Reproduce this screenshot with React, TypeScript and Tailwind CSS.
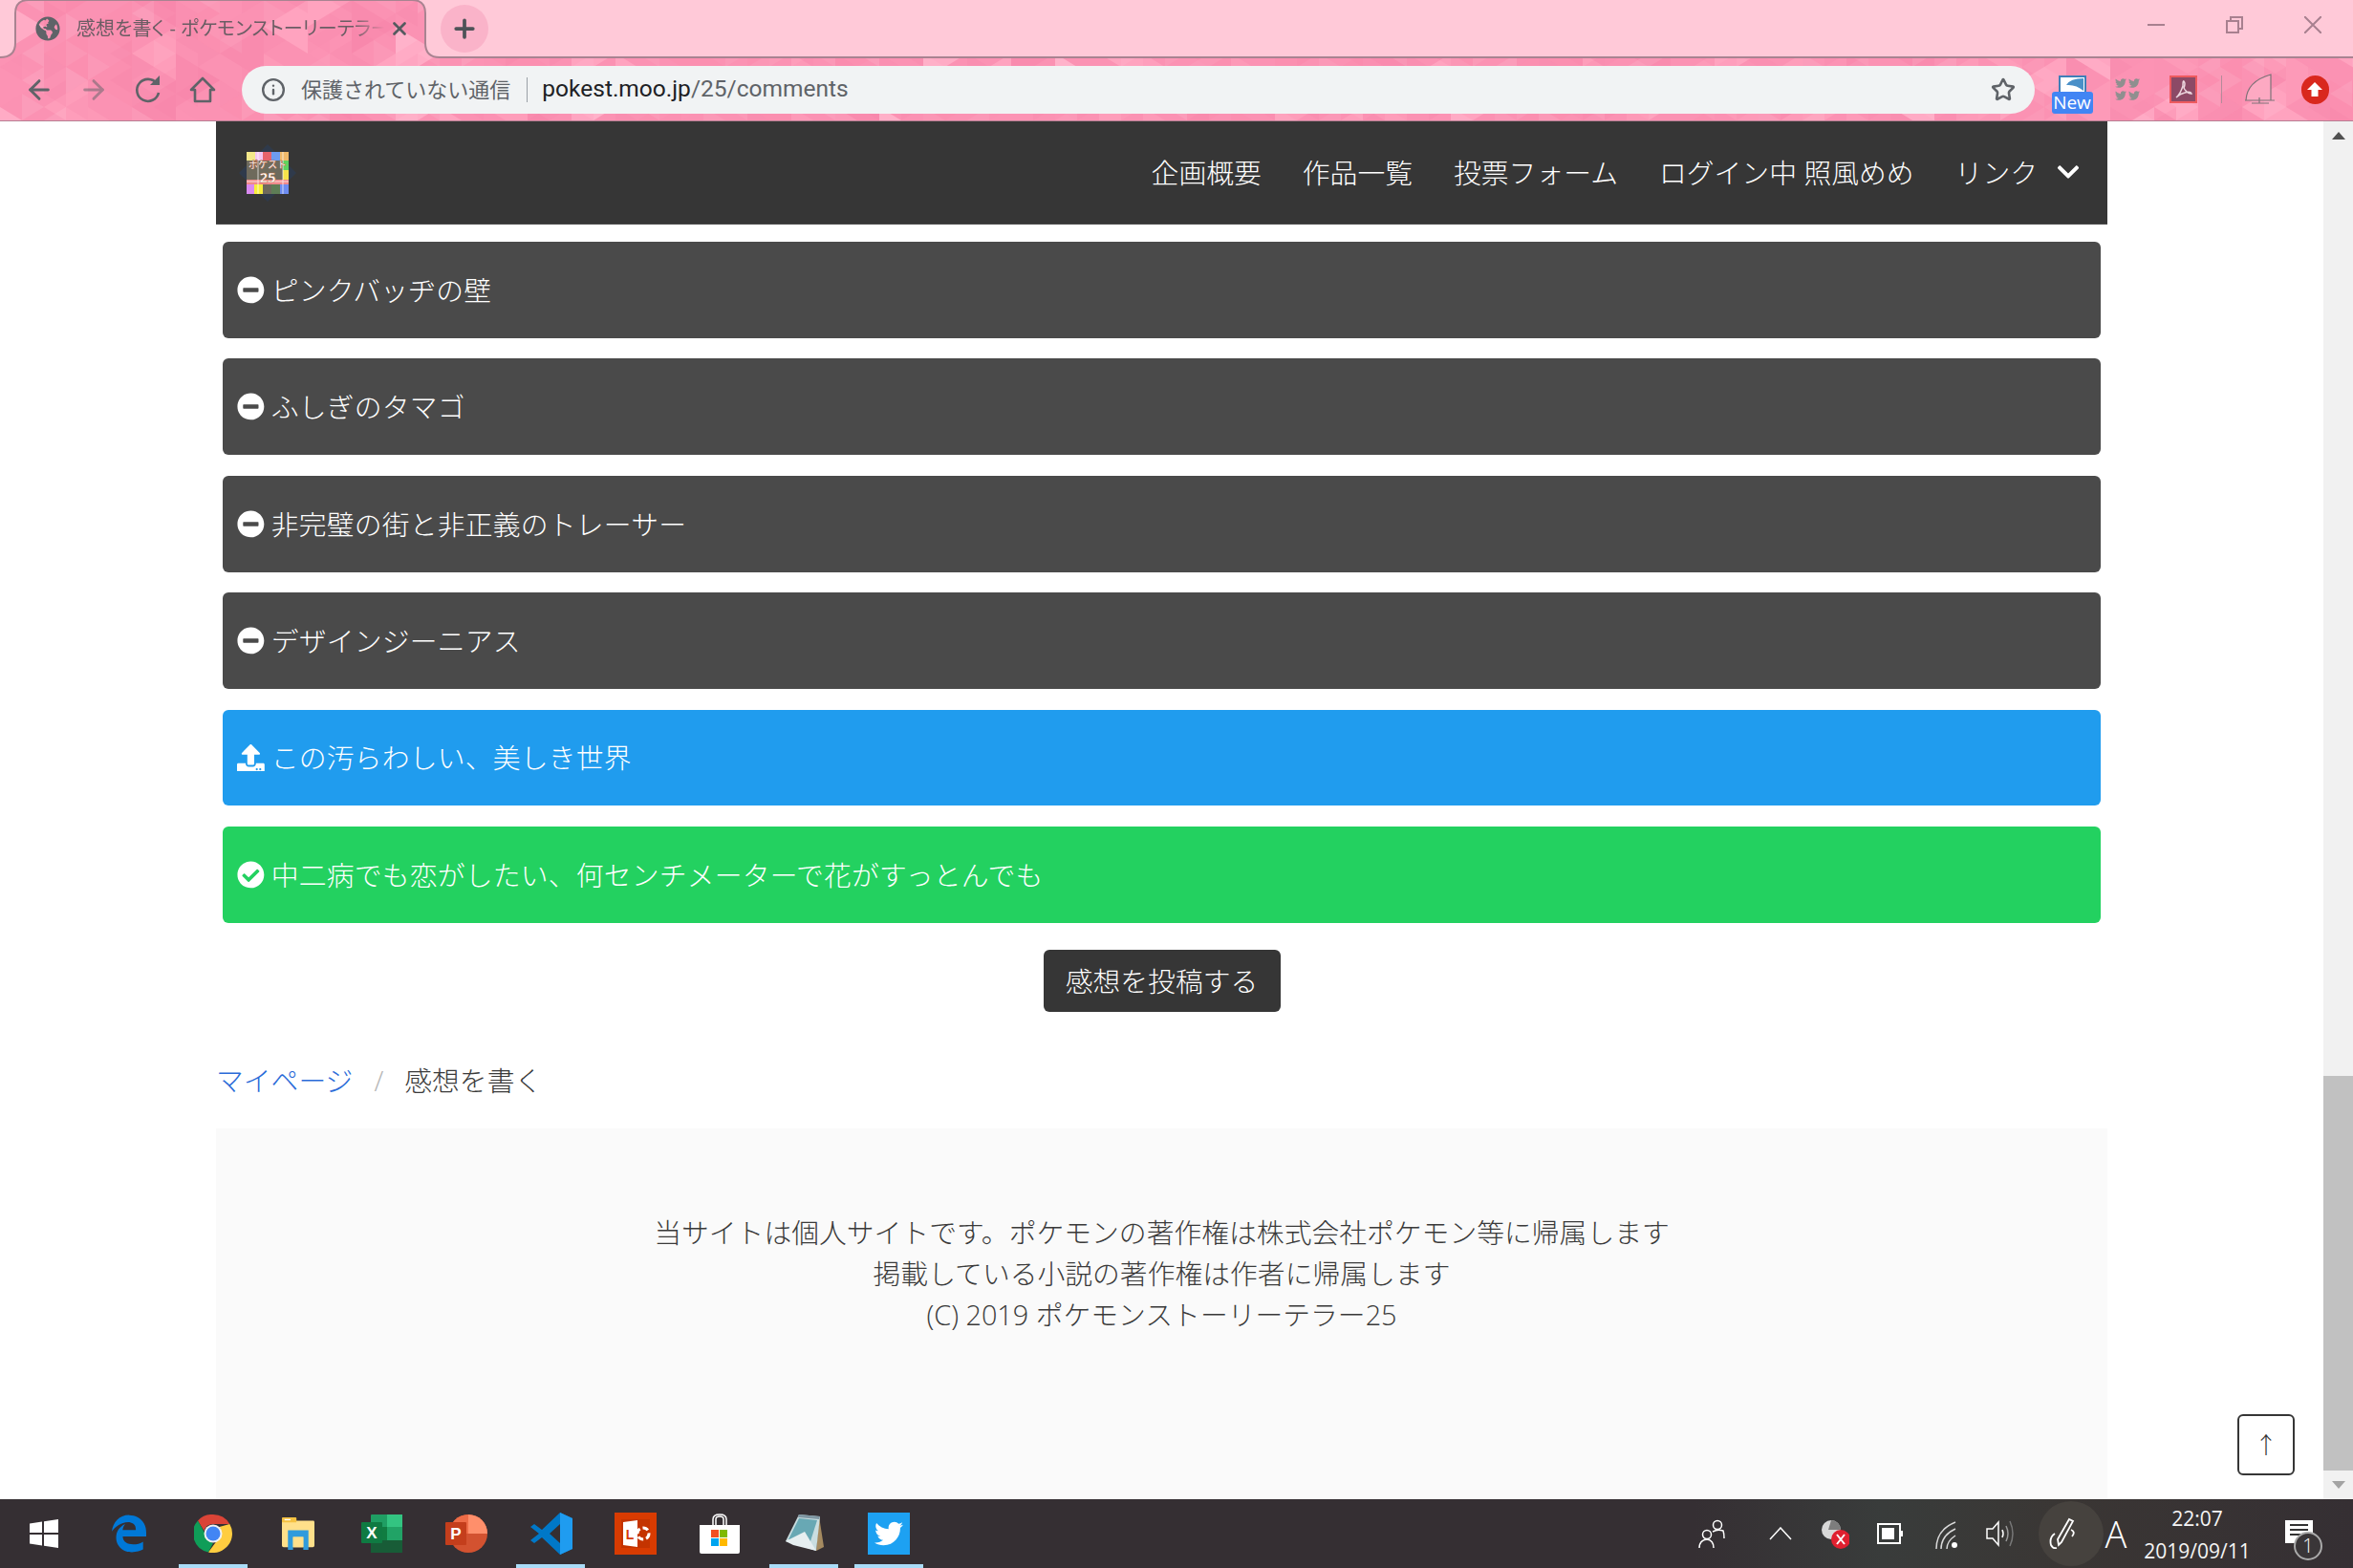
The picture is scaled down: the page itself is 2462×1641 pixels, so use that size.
import React from 'react';
import { ArrowLeft, ArrowRight, Info, Plus, Star, X } from 'lucide-react';
import {
  FaCheckCircle,
  FaChevronDown,
  FaEdgeLegacy,
  FaGlobeAmericas,
  FaMinusCircle,
  FaTwitter,
  FaUpload,
} from 'react-icons/fa';

// Pink triangle theme behind the tab and the toolbar
const makeTriangles = (w: number, h: number, startSeed: number, shades: string[]) => {
  const list: { d: string; fill: string }[] = [];
  let seed = startSeed;
  const next = () => {
    seed = (seed * 1103515245 + 12345) % 2147483648;
    return seed / 2147483648;
  };
  const cols = Math.ceil(2462 / w);
  const rowCount = Math.ceil(127 / h) + 2;
  for (let c = 0; c < cols; c++) {
    for (let r = -1; r < rowCount; r++) {
      const x = c * w;
      const y = r * h + (c % 2 ? h / 2 : 0);
      const right = next() > 0.5;
      const d = right
        ? `M${x} ${y}L${x + w} ${y + h / 2}L${x} ${y + h}Z`
        : `M${x + w} ${y}L${x} ${y + h / 2}L${x + w} ${y + h}Z`;
      list.push({ d, fill: shades[Math.floor(next() * shades.length)] });
    }
  }
  return list;
};

const triangles = [
  ...makeTriangles(46, 56, 7, ['#fb8fb0', '#fd9ab8', '#f98bae', '#ffa3bf', '#fc93b4', '#fe9dba', '#fb8fb0', '#ffabc5']),
  ...makeTriangles(23, 28, 31, ['#ffffff18', '#f4789f26', 'none', 'none', '#ffffff10', '#f4789f18']),
];

const themeShape =
  'M0 60Q16 60 16 45V14Q16 0 30 0H431Q445 0 445 14V45Q445 60 460 60H2462V127H0Z';

const ThemeBackdrop = () => (
  <svg className="absolute inset-0" width="2462" height="127" viewBox="0 0 2462 127">
    <defs>
      <clipPath id="theme-clip">
        <path d={themeShape} />
      </clipPath>
    </defs>
    <g clipPath="url(#theme-clip)">
      <rect width="2462" height="127" fill="#fb92b3" />
      {triangles.map((t, i) => (
        <path key={i} d={t.d} fill={t.fill} />
      ))}
    </g>
    <path
      d="M0 60Q16 60 16 45V14Q16 0 30 0H431Q445 0 445 14V45Q445 60 460 60H2462"
      fill="none"
      stroke="#a98391"
      strokeWidth="2"
    />
    <rect y="126" width="2462" height="1" fill="#b77f93" />
  </svg>
);

const WindowControls = () => (
  <div className="ml-auto flex items-center pb-[8px]">
    <div className="w-[82px] flex justify-center">
      <svg width="18" height="2"><rect width="18" height="2" fill="#a8808f" /></svg>
    </div>
    <div className="w-[82px] flex justify-center">
      <svg width="18" height="18" fill="none" stroke="#a8808f" strokeWidth="2">
        <rect x="1" y="5" width="12" height="12" />
        <path d="M5 5V1H17V13H13" />
      </svg>
    </div>
    <div className="w-[82px] flex justify-center">
      <svg width="18" height="18" stroke="#a8808f" strokeWidth="2">
        <path d="M0 0L18 18M18 0L0 18" />
      </svg>
    </div>
    <div className="w-[1px]" />
  </div>
);

const ToolbarExtensions = () => (
  <div className="flex items-center ml-[10px]">
    <div className="w-[58px] flex justify-center mt-[10px]">
      <div className="relative w-[43px] h-[40px]">
        <svg className="absolute left-[7px] top-0" width="29" height="20" viewBox="0 0 29 20">
          <rect x="1" y="1" width="27" height="19" fill="#fff" stroke="#3f7fb8" strokeWidth="2" />
          <path d="M8 10Q12 3 26 3V16Q18 9 8 10Z" fill="#4a90c8" />
        </svg>
        <div className="absolute left-0 bottom-0 w-[43px] h-[23px] rounded-[3px] bg-[#4285f4] text-white text-[19px] leading-[23px] text-center font-normal">
          New
        </div>
      </div>
    </div>
    <div className="w-[58px] flex justify-center">
      <div className="grid grid-cols-2 gap-x-[2px] gap-y-[1px] text-[#8f8f8f] text-[12px]">
        <FaTwitter />
        <FaTwitter />
        <FaTwitter />
        <FaTwitter />
      </div>
    </div>
    <div className="w-[58px] flex justify-center">
      <svg width="29" height="29" viewBox="0 0 29 29">
        <rect x="1" y="1" width="27" height="27" fill="#8c4a66" stroke="#ee5a5f" strokeWidth="2" />
        <path
          d="M7 23Q11 20 14 11Q14 5 15 6Q17 8 15 13Q18 19 23 19Q22 16 16 18Q11 19 7 23Z"
          fill="none"
          stroke="#ecd6de"
          strokeWidth="1.5"
        />
      </svg>
    </div>
    <div className="ml-[11px] w-[1px] h-[29px] bg-[#b58a9a]" />
    <div className="ml-[12px] w-[56px] flex justify-center">
      <svg width="32" height="34" viewBox="0 0 32 34" fill="none" stroke="#7f7278" strokeWidth="1.2">
        <path d="M1 28Q2 8 27 1V28" fill="#fda9c2" />
        <path d="M0 28H31M15 25V31M7 31H25" />
      </svg>
    </div>
    <div className="w-[58px] flex justify-center">
      <div className="w-[29px] h-[30px] rounded-full bg-[#d9281e] flex items-center justify-center">
        <svg width="16" height="15" viewBox="0 0 16 15" fill="#fff">
          <path d="M0 8L8 0L16 8H11.500V15H4.500V8Z" />
        </svg>
      </div>
    </div>
  </div>
);

const ReloadGlyph = () => (
  <svg width="30" height="30" viewBox="0 0 30 30" fill="none" stroke="currentColor" strokeWidth="2.6">
    <path d="M24 8.500A11.500 11.500 0 1 0 26 18" />
    <path d="M17 10H27V0Z" fill="currentColor" stroke="none" />
  </svg>
);

const HomeGlyph = () => (
  <svg width="30" height="30" viewBox="0 0 30 30" fill="none" stroke="currentColor" strokeWidth="2.6">
    <path d="M3 15L15 3L27 15H23V27H7V15Z" strokeLinejoin="round" />
  </svg>
);

const BrowserChrome = () => (
  <div className="relative h-[127px] shrink-0 bg-[#ffc9d8]">
    <ThemeBackdrop />
    <div className="relative flex h-[60px]">
      <div className="ml-[37px] w-[396px] flex items-center">
        <FaGlobeAmericas className="text-[#5f6368] text-[26px] shrink-0" />
        <div className="ml-[17px] w-[322px] overflow-hidden whitespace-nowrap text-[20px] font-normal text-[#6b5d64] [font-feature-settings:'palt'] [mask-image:linear-gradient(90deg,#000_90%,transparent)]">
          感想を書く - ポケモンストーリーテラー25
        </div>
        <X className="ml-[5px] text-[#555a5f] shrink-0" size={22} strokeWidth={3} />
      </div>
      <div className="ml-[28px] mt-[5px] w-[50px] h-[50px] rounded-full bg-[#fab3c9] flex items-center justify-center text-[#4e5358]">
        <Plus size={30} strokeWidth={3} />
      </div>
      <WindowControls />
    </div>
    <div className="relative flex items-center h-[67px] pl-[12px] text-[#5f6368]">
      <div className="w-[57px] flex justify-center"><ArrowLeft size={32} strokeWidth={2.2} /></div>
      <div className="w-[57px] flex justify-center opacity-50"><ArrowRight size={32} strokeWidth={2.2} /></div>
      <div className="w-[57px] flex justify-center"><ReloadGlyph /></div>
      <div className="w-[57px] flex justify-center"><HomeGlyph /></div>
      <div className="ml-[13px] w-[1876px] h-[50px] rounded-full bg-[#f1f3f4] flex items-center">
        <Info className="ml-[20px]" size={26} strokeWidth={2.2} />
        <span className="ml-[16px] text-[22px] font-normal">保護されていない通信</span>
        <div className="ml-[17px] w-[1px] h-[26px] bg-[#9aa0a6]" />
        <span className="ml-[15px] text-[24.5px] font-normal [font-family:'Roboto','Noto_Sans_CJK_JP',sans-serif] text-[#202124]">
          pokest.moo.jp<span className="text-[#5f6368]">/25/comments</span>
        </span>
        <Star className="ml-auto mr-[20px]" size={26} strokeWidth={2.4} />
      </div>
      <ToolbarExtensions />
    </div>
  </div>
);

const SiteLogo = () => (
  <svg width="60" height="60" viewBox="0 0 60 60">
    <path d="M30 0L60 30L30 60L0 30Z" fill="#2f3a4b" />
    <rect x="8" y="8" width="44" height="44" fill="#6e6a5c" />
    <rect x="8" y="8" width="9" height="9" fill="#f4e88a" />
    <rect x="17" y="8" width="8" height="9" fill="#f5c6f2" />
    <rect x="25" y="8" width="9" height="9" fill="#e8636b" />
    <rect x="34" y="8" width="9" height="9" fill="#6d9bf0" />
    <rect x="43" y="8" width="9" height="9" fill="#f0b96a" />
    <rect x="46" y="17" width="6" height="10" fill="#5fd35f" />
    <rect x="46" y="27" width="6" height="10" fill="#f4e34a" />
    <rect x="8" y="37" width="44" height="5" fill="#f08a8a" />
    <rect x="8" y="42" width="8" height="10" fill="#d98af0" />
    <rect x="16" y="42" width="9" height="10" fill="#f7ee3a" />
    <rect x="34" y="42" width="9" height="10" fill="#5e7d55" />
    <rect x="43" y="42" width="9" height="10" fill="#6d8cf0" />
    <path d="M8 39H52M20 8V52M46 8V52" stroke="#fff" strokeWidth="1" opacity="0.7" />
    <text x="30" y="25" textAnchor="middle" fontSize="10" fontWeight="700" fill="#fff" stroke="#a5502a" strokeWidth="0.4">
      ポケスト
    </text>
    <text x="30" y="40" textAnchor="middle" fontSize="15" fontWeight="700" fill="#fff" stroke="#b5602a" strokeWidth="0.4">
      25
    </text>
  </svg>
);

const SiteHeader = () => (
  <nav className="h-[108px] bg-[#363636] border-b border-[#4a4a4a] flex items-center pl-[24px] pr-[28px] text-white">
    <SiteLogo />
    <div className="ml-auto flex items-center gap-[43px]">
      <span>企画概要</span>
      <span>作品一覧</span>
      <span>投票フォーム</span>
      <span>ログイン中 照風めめ</span>
      <span className="flex items-center gap-[19px]">
        リンク
        <FaChevronDown className="text-white text-[26px]" />
      </span>
    </div>
  </nav>
);

type RowStatus = 'none' | 'current' | 'done';

const rows: { title: string; status: RowStatus }[] = [
  { title: 'ピンクバッヂの壁', status: 'none' },
  { title: 'ふしぎのタマゴ', status: 'none' },
  { title: '非完璧の街と非正義のトレーサー', status: 'none' },
  { title: 'デザインジーニアス', status: 'none' },
  { title: 'この汚らわしい、美しき世界', status: 'current' },
  { title: '中二病でも恋がしたい、何センチメーターで花がすっとんでも', status: 'done' },
];

const rowColors: Record<RowStatus, string> = {
  none: 'bg-[#4a4a4a]',
  current: 'bg-[#209cee]',
  done: 'bg-[#23d160]',
};

const StatusIcon = ({ status }: { status: RowStatus }) => {
  if (status === 'current') return <FaUpload className="text-[28.8px] shrink-0" />;
  if (status === 'done') return <FaCheckCircle className="text-[28.8px] shrink-0" />;
  return <FaMinusCircle className="text-[28.8px] shrink-0" />;
};

const WorkRows = () => (
  <div className="flex flex-col gap-[21.6px] px-[7px] pt-[18px]">
    {rows.map((row) => (
      <div
        key={row.title}
        className={`h-[100.8px] rounded-[6px] flex items-center gap-[7px] pl-[15px] text-white tracking-[0.2px] ${rowColors[row.status]}`}
      >
        <StatusIcon status={row.status} />
        <span>{row.title}</span>
      </div>
    ))}
  </div>
);

const PageFooter = () => (
  <footer className="flex-1 bg-[#fafafa] mt-[29px] pt-[87px] text-center">
    <p>当サイトは個人サイトです。ポケモンの著作権は株式会社ポケモン等に帰属します</p>
    <p>掲載している小説の著作権は作者に帰属します</p>
    <p>(C) 2019 ポケモンストーリーテラー25</p>
  </footer>
);

const PageContent = () => (
  <div className="relative flex-1 min-w-0 flex justify-center">
    <div className="w-[1979px] flex flex-col text-[28.8px] leading-[43.2px] text-[#3a3a3a]">
      <SiteHeader />
      <WorkRows />
      <div className="mt-[28px] flex justify-center">
        <button className="w-[248px] h-[65px] rounded-[6px] bg-[#363636] text-white">感想を投稿する</button>
      </div>
      <div className="mt-[50px] flex items-center">
        <span className="text-[#2a6bd8]">マイページ</span>
        <span className="ml-[22px] text-[#b5b5b5]">/</span>
        <span className="ml-[22px]">感想を書く</span>
      </div>
      <PageFooter />
    </div>
    <div className="absolute right-[30px] bottom-[25px] w-[60px] h-[64px] rounded-[6px] border-2 border-[#363636] bg-white flex items-center justify-center text-[#363636] text-[24px]">
      ↑
    </div>
  </div>
);

const Scrollbar = () => (
  <div className="w-[31px] shrink-0 bg-[#f1f1f1] flex flex-col">
    <div className="h-[30px] flex items-center justify-center">
      <svg width="14" height="8"><path d="M7 0L14 8H0Z" fill="#505050" /></svg>
    </div>
    <div className="flex-1 flex flex-col justify-end">
      <div className="h-[413px] bg-[#c1c1c1]" />
    </div>
    <div className="h-[30px] flex items-center justify-center">
      <svg width="14" height="8"><path d="M0 0H14L7 8Z" fill="#a3a3a3" /></svg>
    </div>
  </div>
);

// Taskbar app icons, 44px boxes
const WindowsLogo = () => (
  <svg width="30" height="30" viewBox="0 0 30 30" fill="#fff">
    <path d="M0 4.500L13 2.500V14H0ZM15 2.200L30 0V14H15ZM0 16H13V27.500L0 25.500ZM15 16H30V30L15 27.800Z" />
  </svg>
);

const ChromeIcon = () => (
  <svg width="40" height="40" viewBox="0 0 40 40">
    <path d="M20 0A20 20 0 0 1 37.300 10H20A10 10 0 0 0 10.500 17L4 6.500A20 20 0 0 1 20 0Z" fill="#db4437" />
    <path d="M4 6.500L13.500 23.500A10 10 0 0 0 20 30L15 39.400A20 20 0 0 1 4 6.500Z" fill="#0f9d58" />
    <path d="M37.300 10A20 20 0 0 1 15 39.400L25 26A10 10 0 0 0 26.500 13L37.300 10Z" fill="#ffcd40" />
    <circle cx="20" cy="20" r="9.500" fill="#f1f1f1" />
    <circle cx="20" cy="20" r="7.500" fill="#4285f4" />
  </svg>
);

const FolderIcon = () => (
  <svg width="38" height="34" viewBox="0 0 40 38">
    <path d="M1 3Q1 0 4 0H14L18 4H38Q39 4 39 6V33Q39 35 37 35H3Q1 35 1 33Z" fill="#ffe08a" />
    <rect x="1" y="0" width="17" height="6" rx="1" fill="#f5c242" />
    <rect x="4" y="2" width="7" height="1.500" fill="#fff" />
    <path d="M8 38V15H32V38H26V23H14V38Z" fill="#2f9bdc" />
    <rect x="14" y="23" width="12" height="12" fill="#ffe08a" />
  </svg>
);

const ExcelIcon = () => (
  <svg width="44" height="40" viewBox="0 0 44 40">
    <rect x="10" y="0" width="33" height="40" rx="1" fill="#1f9e63" />
    <rect x="27" y="0" width="16" height="13" fill="#33c481" />
    <rect x="10" y="13" width="33" height="14" fill="#107c41" />
    <rect x="27" y="13" width="16" height="14" fill="#21a366" />
    <rect x="10" y="27" width="33" height="13" fill="#185c37" />
    <rect x="0" y="8" width="22" height="22" rx="1" fill="#0f7a42" />
    <text x="11" y="25" textAnchor="middle" fontSize="17" fontWeight="700" fill="#fff" fontFamily="Liberation Sans, sans-serif">
      X
    </text>
  </svg>
);

const PowerPointIcon = () => (
  <svg width="44" height="40" viewBox="0 0 44 40">
    <circle cx="24" cy="20" r="20" fill="#d35230" />
    <path d="M24 0A20 20 0 0 1 44 20H24Z" fill="#ff8f6b" />
    <path d="M24 0V20H4A20 20 0 0 1 24 0Z" fill="#ed6c47" />
    <rect x="0" y="8" width="22" height="24" rx="1" fill="#c43e1c" />
    <text x="11" y="26" textAnchor="middle" fontSize="17" fontWeight="700" fill="#fff" fontFamily="Liberation Sans, sans-serif">
      P
    </text>
  </svg>
);

const VSCodeIcon = () => (
  <svg width="44" height="44" viewBox="0 0 44 44">
    <path d="M31 0L44 6V38L31 44L12 26L4 32L0 29L9 22L0 15L4 12L12 18ZM31 12L20 22L31 32Z" fill="#0078c8" />
    <path d="M31 0L44 6V38L31 44Z" fill="#1f9cf0" />
  </svg>
);

const LensIcon = () => (
  <svg width="44" height="44" viewBox="0 0 44 44">
    <rect width="44" height="44" fill="#d83b01" />
    <rect x="7" y="7" width="30" height="30" fill="#c43400" />
    <path d="M9 10L24 8V36L9 34Z" fill="#fff" />
    <text x="16" y="28" textAnchor="middle" fontSize="14" fontWeight="700" fill="#d83b01" fontFamily="Liberation Sans, sans-serif">
      L
    </text>
    <circle cx="30" cy="22" r="6" fill="none" stroke="#fff" strokeWidth="3" strokeDasharray="6 3" />
  </svg>
);

const StoreIcon = () => (
  <svg width="42" height="42" viewBox="0 0 42 42">
    <path d="M14 12V6Q14 1 21 1Q28 1 28 6V12M17 12V6Q17 3 21 3Q25 3 25 6V12" fill="none" stroke="#fff" strokeWidth="1.500" />
    <path d="M0 12H42V40Q42 42 40 42H2Q0 42 0 40Z" fill="#fff" />
    <rect x="12" y="17" width="8" height="8" fill="#f25022" />
    <rect x="21" y="17" width="8" height="8" fill="#7fba00" />
    <rect x="12" y="26" width="8" height="8" fill="#00a4ef" />
    <rect x="21" y="26" width="8" height="8" fill="#ffb900" />
  </svg>
);

const NotesIcon = () => (
  <svg width="40" height="44" viewBox="0 0 40 44">
    <path d="M35 4L40 36L32 40Z" fill="#a58a60" />
    <path d="M14 2L36 4L32 40L0 30Z" fill="#c9dde0" />
    <path d="M14 2L36 4L35 7L13 5Z" fill="#7f97a3" />
    <path d="M14 6L33 8L26 30L3 28Z" fill="#68a8b4" />
    <path d="M0 30L20 20L32 40L8 34Z" fill="#e6eef0" />
  </svg>
);

const TwitterTile = () => (
  <div className="w-[44px] h-[44px] bg-[#1da1f2] flex items-center justify-center text-white text-[30px]">
    <FaTwitter />
  </div>
);

const taskbarApps: { key: string; icon: React.ReactNode; running?: boolean }[] = [
  { key: 'edge', icon: <FaEdgeLegacy className="text-[#0078d7] text-[40px]" /> },
  { key: 'chrome', icon: <ChromeIcon />, running: true },
  { key: 'folder', icon: <FolderIcon /> },
  { key: 'excel', icon: <ExcelIcon /> },
  { key: 'powerpoint', icon: <PowerPointIcon /> },
  { key: 'vscode', icon: <VSCodeIcon />, running: true },
  { key: 'lens', icon: <LensIcon /> },
  { key: 'store', icon: <StoreIcon /> },
  { key: 'notes', icon: <NotesIcon />, running: true },
  { key: 'twitter', icon: <TwitterTile />, running: true },
];

const TrayIcons = () => (
  <div className="ml-auto flex items-center h-full text-white">
    <div className="w-[72px] flex justify-center">
      <svg width="28" height="30" viewBox="0 0 28 30" fill="none" stroke="#fff" strokeWidth="1.500">
        <circle cx="9" cy="16" r="4.500" />
        <path d="M1 30Q1 22 9 21Q16 22 16 30" />
        <circle cx="20" cy="6" r="4.500" />
        <path d="M15 13Q20 10 26 12Q27 15 27 20" />
      </svg>
    </div>
    <div className="w-[72px] flex justify-center">
      <svg width="24" height="14" fill="none" stroke="#fff" strokeWidth="1.500"><path d="M1 13L12 1L23 13" /></svg>
    </div>
    <div className="w-[42px] flex justify-center">
      <svg width="30" height="36" viewBox="0 0 30 36">
        <circle cx="11" cy="14" r="10" fill="#d8d8d8" />
        <path d="M11 4A10 10 0 0 1 21 14H8Z" fill="#7d7d7d" />
        <circle cx="21" cy="24" r="10" fill="#e02030" />
        <path d="M17 19L25 29M25 19L17 29" stroke="#fff" strokeWidth="2" />
      </svg>
    </div>
    <div className="w-[74px] flex justify-center">
      <svg width="28" height="22" fill="none">
        <rect x="1" y="1" width="23" height="20" stroke="#fff" strokeWidth="2" />
        <rect x="5" y="5" width="13" height="12" fill="#fff" />
        <rect x="25" y="8" width="2" height="6" fill="#fff" />
      </svg>
    </div>
    <div className="w-[44px] flex justify-center">
      <svg width="24" height="32" viewBox="0 0 24 32" fill="none" stroke="#d9d9d9" strokeWidth="1.500">
        <path d="M1 32Q1 12 21 4M6 32Q6 18 21 11M12 32Q12 24 21 18" />
        <circle cx="20" cy="28" r="3" fill="#fff" stroke="none" />
      </svg>
    </div>
    <div className="w-[68px] flex justify-center">
      <svg width="30" height="34" viewBox="0 0 30 34" fill="none" stroke="#fff" strokeWidth="1.500">
        <path d="M1 12H7L13 5V29L7 22H1Z" />
        <path d="M17 13Q19 17 17 21" />
        <path d="M21 9Q25 17 21 25" stroke="#999" />
        <path d="M25 4Q31 17 25 30" stroke="#777" />
      </svg>
    </div>
    <div className="w-[80px] flex justify-center">
      <div className="w-[68px] h-[68px] rounded-full bg-[#46423e] flex items-center justify-center pr-[18px]">
        <svg width="30" height="36" viewBox="0 0 30 36" fill="none" stroke="#fff" strokeWidth="1.800">
          <path d="M11 30L10 24L22 3L26 5L14 27Z" />
          <path d="M7 18Q1 22 3 30Q5 34 9 33M24 14Q29 16 25 21" />
        </svg>
      </div>
    </div>
    <div className="w-[14px] flex justify-center text-[38px] font-light [font-family:'Open_Sans','Noto_Sans_CJK_JP',sans-serif]">
      A
    </div>
    <div className="w-[156px] text-center text-[#f5f5f5] text-[21px] leading-[34px] pt-[2px] font-normal [font-family:'Open_Sans','Noto_Sans_CJK_JP',sans-serif]">
      <div>22:07</div>
      <div>2019/09/11</div>
    </div>
    <div className="relative w-[56px] h-full flex justify-center">
      <div className="w-[29px] h-[24px] mt-[22px] bg-white flex flex-col gap-[3px] px-[5px] py-[4px]">
        <div className="h-[2px] bg-[#333]" />
        <div className="h-[2px] bg-[#333]" />
        <div className="h-[2px] bg-[#333]" />
      </div>
      <div className="absolute left-[23px] top-[34px] w-[30px] h-[30px] rounded-full border-2 border-[#aaa] bg-[#3a3638] flex items-center justify-center text-[20px] text-white">
        1
      </div>
    </div>
    <div className="w-[29px]" />
  </div>
);

const Taskbar = () => (
  <div className="h-[72px] shrink-0 flex items-center bg-[linear-gradient(90deg,#352f33_0%,#352f33_72%,#393c3b_80%,#3a3634_88%,#352f33_100%)]">
    <div className="w-[91px] flex justify-center">
      <WindowsLogo />
    </div>
    {taskbarApps.map((app) => (
      <div key={app.key} className="relative w-[88.300px] h-full flex items-center justify-center">
        {app.icon}
        {app.running && <div className="absolute bottom-0 left-[8px] w-[72px] h-[4px] bg-[#a9dcf8]" />}
      </div>
    ))}
    <TrayIcons />
  </div>
);

export default function App() {
  return (
    <div className="w-[2462px] h-[1641px] flex flex-col overflow-hidden bg-white font-light [font-family:'Open_Sans','Noto_Sans_CJK_JP',sans-serif]">
      <BrowserChrome />
      <div className="flex-1 min-h-0 flex">
        <PageContent />
        <Scrollbar />
      </div>
      <Taskbar />
    </div>
  );
}
